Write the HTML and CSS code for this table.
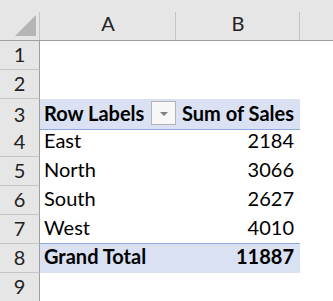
FILE: index.html
```html
<!DOCTYPE html>
<html lang="en">
<head>
  <meta charset="UTF-8" />
  <title>Pivot Table</title>
  <link rel="stylesheet" href="styles.css">
</head>
<body>
  <div class="sheet">
    <div class="row head">
      <div class="corner"><span class="corner-tri"></span></div>
      <div class="ch">A</div>
      <div class="ch">B</div>
      <div class="ch rest"></div>
    </div>

    <div class="row"><div class="rh">1</div><div class="cell"></div><div class="cell"></div><div class="cell"></div></div>
    <div class="row"><div class="rh">2</div><div class="cell"></div><div class="cell"></div><div class="cell"></div></div>

    <div class="row">
      <div class="rh">3</div>
      <div class="cell pv pv-head bold label-cell">
        <span class="label-text">Row Labels</span>
        <span class="dd"><span class="dd-arrow"></span></span>
      </div>
      <div class="cell pv pv-head bold num">Sum of Sales</div>
      <div class="cell"></div>
    </div>

    <div class="row"><div class="rh">4</div><div class="cell">East</div><div class="cell num">2184</div><div class="cell"></div></div>
    <div class="row"><div class="rh">5</div><div class="cell">North</div><div class="cell num">3066</div><div class="cell"></div></div>
    <div class="row"><div class="rh">6</div><div class="cell">South</div><div class="cell num">2627</div><div class="cell"></div></div>
    <div class="row"><div class="rh">7</div><div class="cell pv-above">West</div><div class="cell num pv-above">4010</div><div class="cell"></div></div>

    <div class="row">
      <div class="rh">8</div>
      <div class="cell pv bold">Grand Total</div>
      <div class="cell pv bold num">11887</div>
      <div class="cell"></div>
    </div>

    <div class="row"><div class="rh">9</div><div class="cell"></div><div class="cell"></div><div class="cell"></div></div>
  </div>
</body>
</html>
```

FILE: styles.css
```css
body {
  margin: 0;
  padding: 0;
  background: #ffffff;
  font-family: 'Lato', 'Liberation Sans', sans-serif;
  color: #000;
  overflow: hidden;
}

.sheet {
  width: 333px;
}

.row {
  display: grid;
  grid-template-columns: 40px 136px 124px 1fr;
  height: 29px;
}

.row.head {
  height: 41px;
  background: #e6e6e6;
  border-bottom: 1px solid #9e9e9e;
  box-sizing: border-box;
}

.corner {
  position: relative;
  border-right: 1px solid #c4c4c4;
  margin-top: 12px;
}

.corner-tri {
  position: absolute;
  left: 15px;
  top: 3px;
  width: 21px;
  height: 21px;
  background: #b5b5b5;
  clip-path: polygon(100% 0, 100% 100%, 0 100%);
}

.ch {
  display: flex;
  align-items: flex-end;
  justify-content: center;
  padding-bottom: 5px;
  font-size: 20px;
  color: #222;
  box-sizing: border-box;
  position: relative;
}

.ch::after {
  content: "";
  position: absolute;
  right: 0;
  top: 12px;
  bottom: 0;
  width: 1px;
  background: #c4c4c4;
}

.ch.rest::after {
  display: none;
}

.rh {
  background: #e6e6e6;
  border-right: 1px solid #9e9e9e;
  border-bottom: 1px solid #c6c6c6;
  box-sizing: border-box;
  display: flex;
  align-items: flex-end;
  justify-content: center;
  padding-bottom: 3px;
  font-size: 20px;
  color: #222;
}

.cell {
  display: flex;
  align-items: flex-end;
  justify-content: space-between;
  padding: 0 6px 4px 4px;
  border-bottom: 1px solid transparent;
  box-sizing: border-box;
  font-size: 20px;
  white-space: nowrap;
}

.num {
  justify-content: flex-end;
}

.bold {
  font-weight: 700;
}

.pv {
  background: #d9e1f2;
}

.pv-head,
.pv-above {
  border-bottom-color: #8ea9db;
}

/* filter button sits at the right edge of the label cell */
.label-cell {
  align-items: flex-start;
  padding: 2px 0 2px 4px;
}

.label-text {
  align-self: flex-end;
  margin-bottom: 2px;
}

.dd {
  width: 25px;
  height: 24px;
  box-sizing: border-box;
  border: 1px solid #b4b4b4;
  background: #f7f7f7;
  display: flex;
  align-items: center;
  justify-content: center;
}

.dd-arrow {
  width: 0;
  height: 0;
  margin-top: 1px;
  border-left: 4px solid transparent;
  border-right: 4px solid transparent;
  border-top: 4px solid #7f7f7f;
}
```
